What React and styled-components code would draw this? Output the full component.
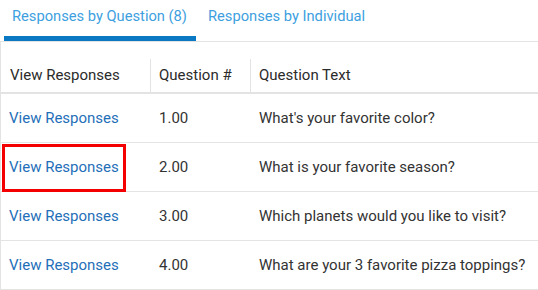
import React from "react"
import styled, { createGlobalStyle, css } from "styled-components"

const Global = createGlobalStyle`
  html, body {
    margin: 0;
    padding: 0;
    background: #fff;
  }
  body {
    font-family: Roboto, "Liberation Sans", Arial, sans-serif;
    font-size: 15px;
    color: #333;
  }
`

const Page = styled.div`
  width: 538px;
  height: 290px;
  overflow: hidden;
`

const TabBar = styled.div`
  display: flex;
  padding-left: 4px;
  height: 41px;
  border-bottom: 1px solid #e3e3e3;
`

const Tab = styled.div`
  display: flex;
  align-items: center;
  padding: 0 9px 5px 8px;
  margin-right: 4px;
  color: #3d9fe0;
  font-size: 14.7px;
  box-sizing: border-box;
  border-bottom: 5px solid transparent;
  ${(p) =>
    p.$active &&
    css`
      border-bottom-color: #0a78c2;
    `}
`

const Table = styled.table`
  width: 100%;
  border-collapse: collapse;
  border-left: 1px solid #e3e3e3;
`

const HeadCell = styled.th`
  width: ${(p) => p.$width || "auto"};
  padding: 17px 0 0 0;
  text-align: left;
  font-weight: 400;
  color: #2b2b2b;
  border-bottom: 2px solid #e3e3e3;
  vertical-align: bottom;
`

const HeadLabel = styled.div`
  height: 33px;
  line-height: 33px;
  padding-left: 8px;
  box-sizing: border-box;
  border-left: 1px solid ${(p) => (p.$divider ? "#e3e3e3" : "transparent")};
`

const Row = styled.tr`
  border-bottom: 1px solid #e3e3e3;
`

const Cell = styled.td`
  position: relative;
  height: 49px;
  padding: 0 8px;
  box-sizing: border-box;
  color: #333;
  white-space: nowrap;

  & + & {
    padding-left: 9px;
  }
`

const Link = styled.a`
  color: #1f6fb8;
  text-decoration: none;
  cursor: pointer;
`

const Highlight = styled.span`
  position: absolute;
  left: 1px;
  top: 1px;
  width: 124px;
  height: 48px;
  box-sizing: border-box;
  border: 3px solid #f40000;
  pointer-events: none;
`

const questions = [
  { num: "1.00", text: "What's your favorite color?" },
  { num: "2.00", text: "What is your favorite season?", marked: true },
  { num: "3.00", text: "Which planets would you like to visit?" },
  { num: "4.00", text: "What are your 3 favorite pizza toppings?" },
]

export default function App() {
  return (
    <Page>
      <Global />
      <TabBar>
        <Tab $active>Responses by Question (8)</Tab>
        <Tab>Responses by Individual</Tab>
      </TabBar>

      <Table>
        <thead>
          <tr>
            <HeadCell $width="149px">
              <HeadLabel>View Responses</HeadLabel>
            </HeadCell>
            <HeadCell $width="100px">
              <HeadLabel $divider>Question #</HeadLabel>
            </HeadCell>
            <HeadCell>
              <HeadLabel $divider>Question Text</HeadLabel>
            </HeadCell>
          </tr>
        </thead>
        <tbody>
          {questions.map((q) => (
            <Row key={q.num}>
              <Cell>
                <Link>View Responses</Link>
                {q.marked && <Highlight />}
              </Cell>
              <Cell>{q.num}</Cell>
              <Cell>{q.text}</Cell>
            </Row>
          ))}
        </tbody>
      </Table>
    </Page>
  )
}
